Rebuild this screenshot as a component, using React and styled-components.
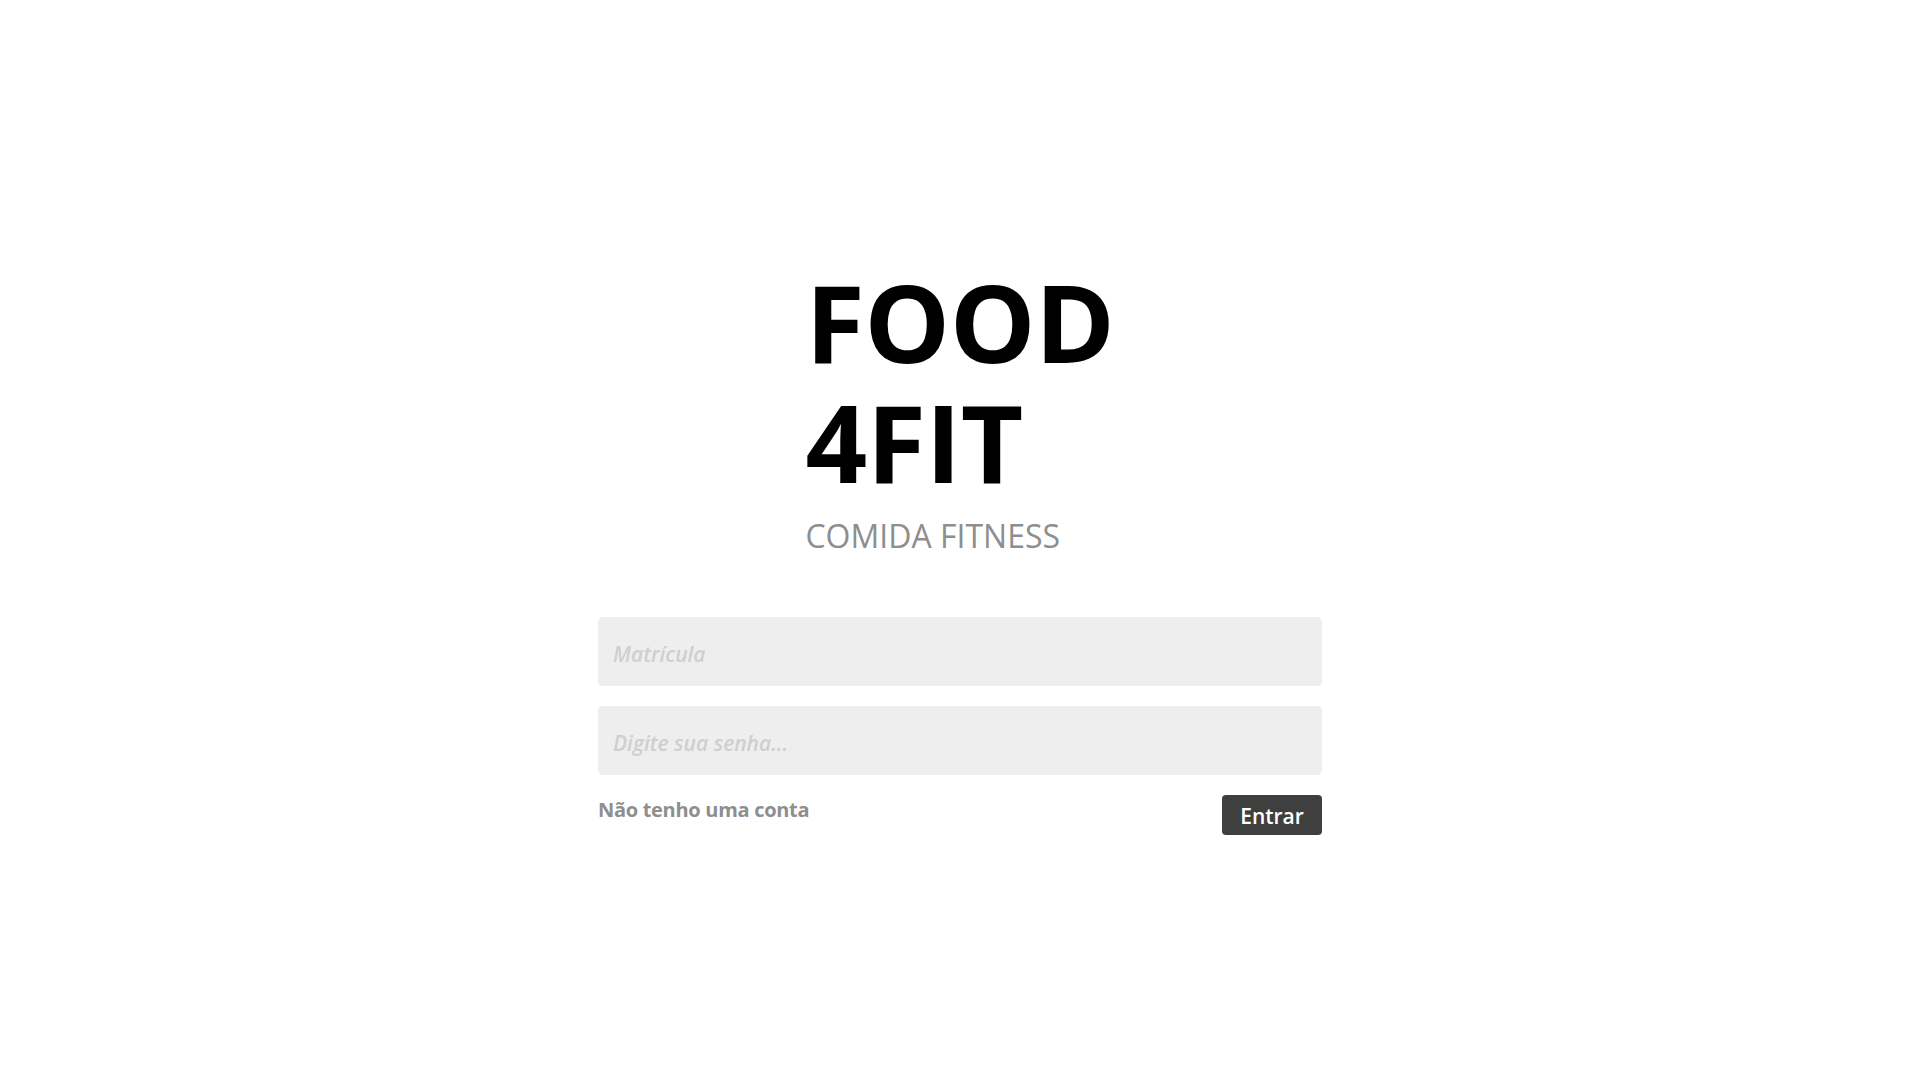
import React from "react";
import styled, { createGlobalStyle } from "styled-components";

const Global = createGlobalStyle`
  html, body { margin: 0; padding: 0; background: #ffffff; }
  body { font-family: "Open Sans", "Noto Sans", sans-serif; }
  * { box-sizing: border-box; }
`;

const Page = styled.main`
  min-height: 100vh;
  display: flex;
  flex-direction: column;
  align-items: center;
  padding-top: 262px;
`;

const Brand = styled.header`
  display: flex;
  flex-direction: column;
  align-items: flex-start;
`;

const Title = styled.h1`
  margin: 0;
  font-family: "Open Sans", "Noto Sans", sans-serif;
  font-weight: 700;
  font-size: 108px;
  line-height: 120px;
  letter-spacing: -0.5px;
  color: #000;
`;

const Subtitle = styled.h2`
  margin: 16px 0 0 0;
  font-family: "Open Sans", "Noto Sans", sans-serif;
  font-weight: 400;
  font-size: 32px;
  line-height: 36px;
  color: #8e8e8e;
`;

const Form = styled.form`
  width: 724px;
  margin-top: 63px;
  display: flex;
  flex-direction: column;
  gap: 20px;
`;

const Input = styled.input`
  width: 100%;
  height: 69px;
  border: none;
  outline: none;
  border-radius: 5px;
  background: #eeeeee;
  padding: 4px 15px 0 15px;
  font-family: "Open Sans", "Noto Sans", sans-serif;
  font-size: 21px;
  color: #333;
  &::placeholder {
    color: #cfcfcf;
    font-style: italic;
    font-weight: 600;
  }
`;

const Footer = styled.div`
  display: flex;
  justify-content: space-between;
  align-items: flex-start;
`;

const SignupLink = styled.a`
  font-family: "Open Sans", "Noto Sans", sans-serif;
  font-size: 20px;
  font-weight: 700;
  line-height: 30px;
  color: #8e8e8e;
  text-decoration: none;
  letter-spacing: -0.3px;
  cursor: pointer;
`;

const Button = styled.button`
  width: 100px;
  height: 40px;
  border: none;
  border-radius: 4px;
  background: #3f3f3f;
  color: #ffffff;
  font-family: "Open Sans", "Noto Sans", sans-serif;
  font-size: 21px;
  font-weight: 600;
  padding: 2px 0 0 0;
  cursor: pointer;
`;

export default function App() {
  return (
    <>
      <Global />
      <Page>
        <Brand>
          <Title>
            FOOD
            <br />
            4FIT
          </Title>
          <Subtitle>COMIDA FITNESS</Subtitle>
        </Brand>
        <Form onSubmit={(e) => e.preventDefault()}>
          <Input type="text" placeholder="Matrícula" />
          <Input type="password" placeholder="Digite sua senha..." />
          <Footer>
            <SignupLink>Não tenho uma conta</SignupLink>
            <Button type="submit">Entrar</Button>
          </Footer>
        </Form>
      </Page>
    </>
  );
}
